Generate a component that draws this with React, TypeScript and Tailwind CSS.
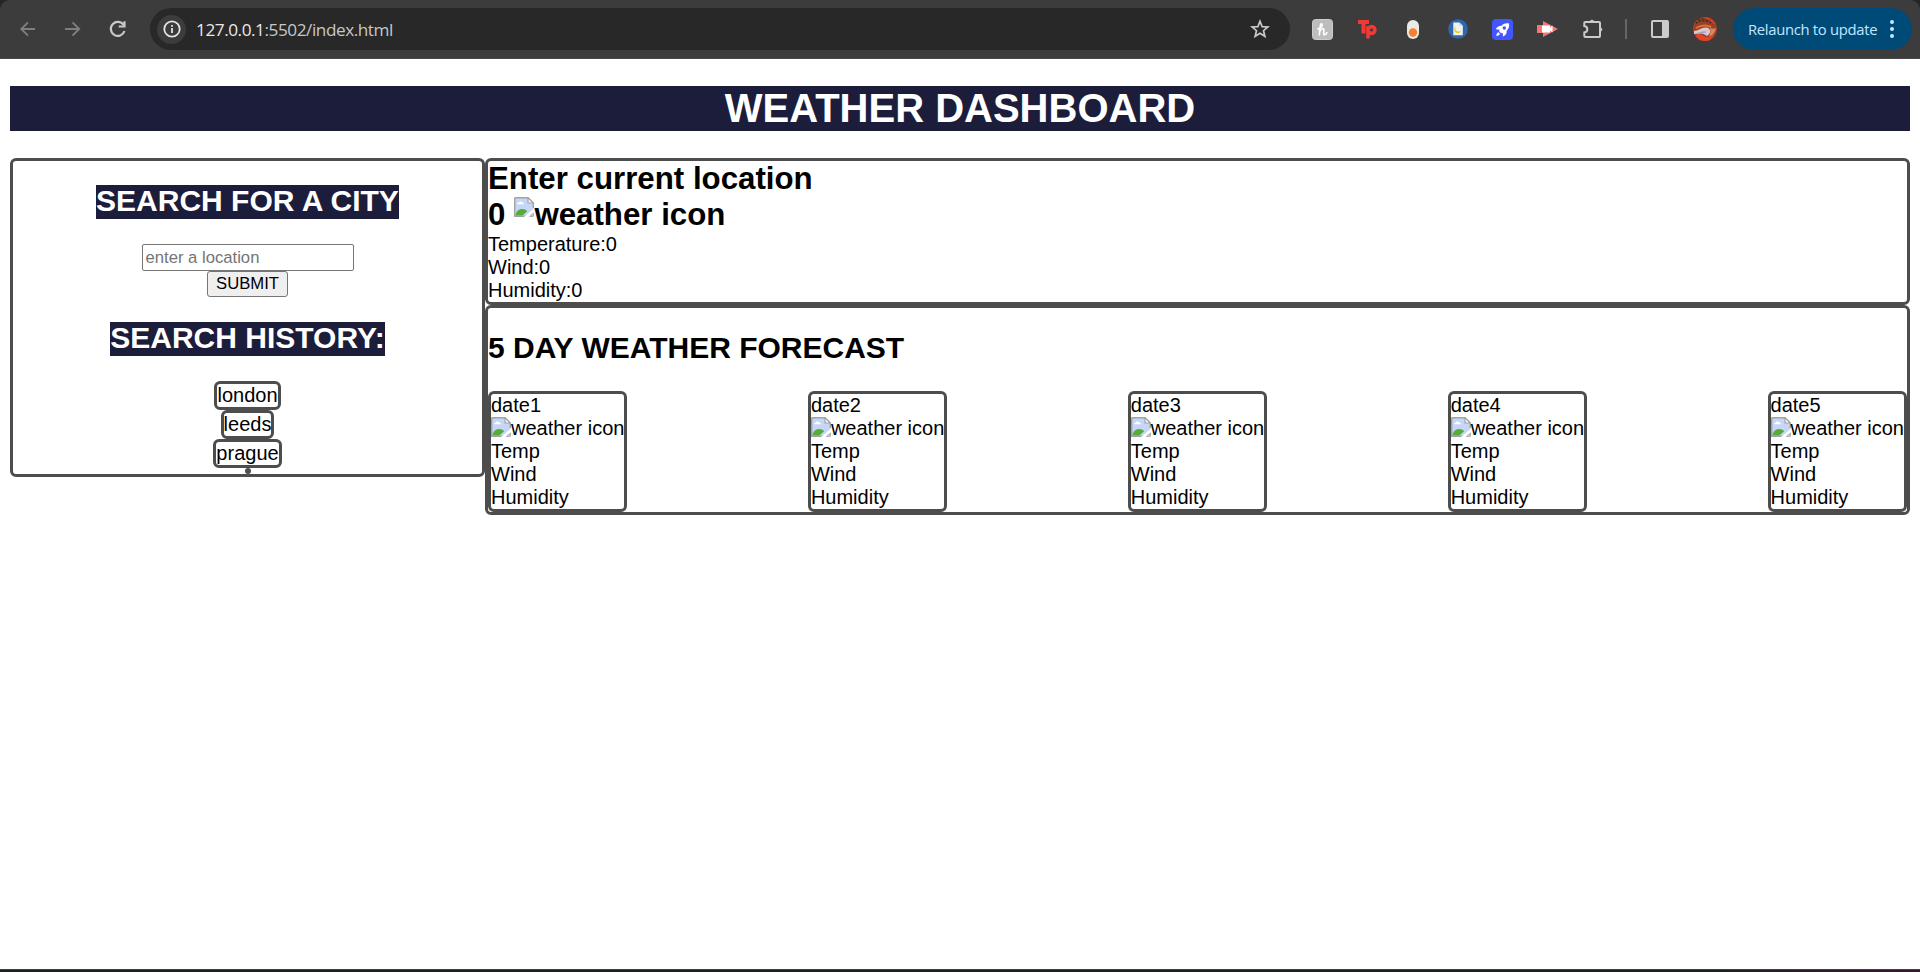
import React from "react";

function BrokenImage({ className = "" }: { className?: string }) {
  return (
    <svg viewBox="0 0 20 20" className={"inline-block h-5 w-5 shrink-0 " + className}>
      <path d="M.7.7H14L19.3 6v7L12 19.3H.7Z" fill="#c5d6f6" />
      <path d="M.7.7V19.3H12M.7.7H14L19.3 6v5" fill="none" stroke="#a3a3a3" strokeWidth="1.4" />
      <path d="M14 .7V6h5.3Z" fill="#f4f4f4" stroke="#a3a3a3" strokeWidth="1.1" />
      <path d="M3 7.2c0-1.300 1-1.700 1.800-1.500C5.200 4 8 4 8.300 5.600c1.200 0 1.600.8 1.500 1.600Z" fill="#fff" />
      <path d="M1.400 18.600c.4-4 3.300-6.600 6.800-6.600 2.200 0 3.800.9 5 2.200l-4.800 4.400Z" fill="#57ab37" />
      <path d="M19.300 16v3.300h-4Z" fill="#c5d6f6" stroke="#a3a3a3" strokeWidth="1" />
      <path d="M10 20 20 11.500v3.300L14.500 20Z" fill="#fff" />
    </svg>
  );
}

function Heading({ children }: { children: React.ReactNode }) {
  return (
    <h2 className="h-[34px] bg-[#1c1c3b] text-[30px] leading-[32px] font-bold whitespace-nowrap text-white">
      {children}
    </h2>
  );
}

function Toolbar() {
  return (
    <div className="bg-[#262626]">
      <div className="flex h-[59px] items-center rounded-t-[10px] border-b border-[#474747] bg-[#3c3c3c]">
        <div className="flex w-[150px] shrink-0 items-center pl-[18px]">
          <svg viewBox="0 0 20 20" className="h-5 w-5" fill="none" stroke="#7e7e7e" strokeWidth="1.9">
            <path d="M17 10H3.500M10 3.300 3.300 10l6.700 6.700" />
          </svg>
          <svg viewBox="0 0 20 20" className="ml-[25px] h-5 w-5" fill="none" stroke="#7e7e7e" strokeWidth="1.900">
            <path d="M2 10h13.500M9.500 3.300 16.200 10l-6.700 6.700" />
          </svg>
          <svg viewBox="0 0 20 20" className="ml-[25px] h-5 w-5" fill="none" stroke="#c9c9c9" strokeWidth="2.200">
            <path d="M15.800 6.200A7 7 0 1 0 16.500 12" />
            <path d="M16.500 2.200v5.300h-5.800" />
          </svg>
        </div>
        <div className="flex h-[42px] w-[1140px] shrink-0 items-center rounded-full bg-[#282828] pr-5 pl-[7px]">
          <div className="flex h-[29px] w-[29px] items-center justify-center rounded-full bg-[#3c3c3c]">
            <svg viewBox="0 0 18 18" className="h-[18px] w-[18px]" fill="none" stroke="#e3e3e3" strokeWidth="1.800">
              <circle cx="9" cy="9" r="7.700" />
              <path d="M9 8v5M9 5v1.800" />
            </svg>
          </div>
          <div className="ml-[10px] flex-1 font-['Open_Sans','Noto_Sans',sans-serif] text-[17.200px] tracking-[-0.450px] text-[#c7c7c7]">
            <span className="text-[#e8e8e8]">127.0.0.1</span>:5502/index.html
          </div>
          <svg viewBox="0 0 20 20" className="h-5 w-5" fill="none" stroke="#c9c9c9" strokeWidth="1.700">
            <path d="m10 2.300 2.100 5.300 5.800.4-4.400 3.700 1.400 5.600-4.900-3.100-4.900 3.100 1.400-5.600L2.100 8l5.800-.4Z" />
          </svg>
        </div>
        <div className="flex shrink-0 items-center pl-[22px]">
          <svg viewBox="0 0 21 21" className="h-[21px] w-[21px]">
            <rect x=".5" y=".5" width="20" height="20" rx="3" fill="#bdbdbd" stroke="#cdcdcd" />
            <path d="M6 9.800C8.800 9.300 11 6.500 10 5c-1.200-1.200-2.200 2-2.600 10.800M7.600 13c1-3 3.800-4.500 4.200-2.500.3 1.500-1 5.300.6 5.300 1 0 1.800-1 2.400-2" fill="none" stroke="#fff" strokeWidth="1.700" strokeLinecap="round" />
          </svg>
          <svg viewBox="0 0 20 20" className="ml-[24px] h-5 w-5" fill="none" stroke="#f03a38">
            <path d="M1 3h11M6.500 2v12.500" strokeWidth="4" />
            <path d="M11 19.500V7" strokeWidth="3.600" />
            <circle cx="14.500" cy="11" r="3.400" strokeWidth="3.600" />
          </svg>
          <svg viewBox="0 0 12 19" className="ml-[30px] h-[19px] w-3">
            <rect width="12" height="19" rx="6" fill="#e9e9e6" />
            <circle cx="6" cy="12.500" r="4.200" fill="#f5812f" />
          </svg>
          <svg viewBox="0 0 20 20" className="ml-[29px] h-5 w-5">
            <circle cx="10" cy="10" r="9.800" fill="#2e66b1" />
            <path d="M5.300 3.500h6l3.500 3.300v9.500H5.300Z" fill="#f5f3e7" />
            <path d="M8 7c-2 3 .5 7 5 5-1 3.300-6.500 2.500-6.700-1.300C6.200 9 7 7.500 8 7" fill="#e7c833" />
            <path d="M11.300 3.500v3.300h3.500" fill="#c8d3df" />
          </svg>
          <svg viewBox="0 0 21 21" className="ml-[24px] h-[21px] w-[21px]">
            <rect width="21" height="21" rx="4" fill="#4255ff" />
            <path d="M17 4.500c-3-.6-5.500.2-7.300 2.200C7 6.500 5 7.800 3.800 10.300l3.900.5-.6 1.500 2 2 1.500-.6.5 3.900c2.500-1.200 3.800-3.200 3.600-5.900 2-1.800 2.800-4.200 2.300-7.200Z" fill="#fff" />
            <circle cx="12.300" cy="9" r="1.700" fill="#4255ff" />
            <path d="M6.500 13.300c-1.500.4-2 1.500-2.200 3.600 2.100-.2 3.200-.7 3.600-2.200Z" fill="#fff" />
          </svg>
          <svg viewBox="0 0 21 18" className="ml-[24px] h-[18px] w-[21px]">
            <path d="M0 5h6V1l15 8L6 17v-4H0Z" fill="#f77575" />
            <path d="M5 5.500h8v2l2.500-2V12.500l-2.500-2v2H5Z" fill="#fff" />
          </svg>
          <svg viewBox="0 0 22 22" className="ml-[24px] h-[22px] w-[22px]" fill="none" stroke="#cbcbcb" strokeWidth="2">
            <path d="M3.300 4H17a1 1 0 0 1 1 1v13a1 1 0 0 1-1 1H3.300a1 1 0 0 1-1-1v-3.500c4-.5 4-6 0-6.500V5a1 1 0 0 1 1-1Z" />
            <path d="M8 3.500a2.200 2.200 0 0 1 4 0ZM18.500 9.500a2.200 2.200 0 0 1 0 4Z" fill="#cbcbcb" strokeWidth="1" />
          </svg>
          <div className="ml-[21px] h-5 w-[2px] bg-[#666]" />
          <svg viewBox="0 0 18 18" className="ml-[24px] h-[18px] w-[18px]">
            <rect x="1" y="1" width="16" height="16" rx="1" fill="none" stroke="#cbcbcb" strokeWidth="2" />
            <path d="M11 1h6v16h-6Z" fill="#cbcbcb" />
          </svg>
          <svg viewBox="0 0 24 24" className="ml-[24px] h-6 w-6 rounded-full">
            <rect width="24" height="24" fill="#a93e25" />
            <path d="M0 12c5-6 14-6 24 0V0H0Z" fill="#8f4528" />
            <path d="M3 6c5-3 11-3 17 1M5 3c4-2 9-1 13 1" stroke="#4b2419" strokeWidth="1.500" strokeDasharray="2 1.500" fill="none" />
            <path d="M12 1c4 0 8 3 9 6" stroke="#e23a1c" strokeWidth="2" fill="none" />
            <path d="M3 11c5-3 11-3 15-1" stroke="#d9713f" strokeWidth="2" fill="none" />
            <path d="M1 14c5 0 9-5 14-3 3 1 3 6-1 8-3-3-8-3-13-2Z" fill="#d6c9d2" />
            <path d="M4 16c3-1 7-3 10-1-2 1-5 1-9 3Z" fill="#9aa3c4" />
            <path d="M17 11c3 1 4 1 6 0-1 5-3 7-7 9 1-3 2-6 1-9Z" fill="#d58a60" />
            <path d="M2 18c5-2 8 1 11 2s5-2 8-2l-5 6H7Z" fill="#e0442a" />
          </svg>
        </div>
        <div className="ml-[16px] flex h-[42px] w-[179px] shrink-0 items-center rounded-full bg-[#004a77] pl-[15px] font-['Open_Sans','Noto_Sans',sans-serif] text-[14.800px] tracking-[-0.300px] text-[#c2e7ff]">
          <span className="w-[130px] whitespace-nowrap">Relaunch to update</span>
          <svg viewBox="0 0 4 18" className="ml-[12px] h-[18px] w-1" fill="#c2e7ff">
            <circle cx="2" cy="2" r="2" />
            <circle cx="2" cy="9" r="2" />
            <circle cx="2" cy="16" r="2" />
          </svg>
        </div>
      </div>
    </div>
  );
}

function SearchPanel() {
  return (
    <aside className="flex h-[319px] w-[475px] shrink-0 flex-col items-center rounded-[6px] border-[3px] border-[#4d4d4d] pt-6">
      <Heading>SEARCH FOR A CITY</Heading>
      <input
        placeholder="enter a location"
        className="mt-[25px] h-[27px] w-[212px] shrink-0 rounded-[2px] border border-[#767676] px-[3px] text-[16.670px] placeholder:text-[#757575]"
      />
      <button className="h-[26px] w-[81px] shrink-0 rounded-[3px] border border-[#767676] bg-[#efefef] text-[16.670px] leading-6">
        SUBMIT
      </button>
      <div className="mt-[25px]">
        <Heading>SEARCH HISTORY:</Heading>
      </div>
      <ul className="mt-[25px] flex flex-col items-center">
        {["london", "leeds", "prague", ""].map((city) => (
          <li key={city} className="rounded-[6px] border-[3px] border-[#4d4d4d]">
            {city}
          </li>
        ))}
      </ul>
    </aside>
  );
}

function ForecastCard({ date }: { date: string }) {
  return (
    <div className="rounded-[6px] border-[3px] border-[#4d4d4d]">
      <p>{date}</p>
      <div className="flex h-[23px] whitespace-nowrap">
        <BrokenImage />
        weather icon
      </div>
      <p>Temp</p>
      <p>Wind</p>
      <p>Humidity</p>
    </div>
  );
}

export default function App() {
  return (
    <div className="flex h-[972px] flex-col overflow-hidden bg-white font-['Liberation_Sans',Arial,sans-serif] text-[20px] leading-[23px] text-black">
      <Toolbar />
      <main className="flex-1 px-[10px] pt-[27px]">
        <h1 className="h-[45px] bg-[#1c1c3b] text-center text-[40px] leading-[45px] font-bold text-white">
          WEATHER DASHBOARD
        </h1>
        <div className="mt-[27px] flex items-start">
          <SearchPanel />
          <div className="flex-1">
            <section className="h-[147px] rounded-[6px] border-[3px] border-[#4d4d4d]">
              <div className="text-[31.250px] leading-9 font-bold">
                <p>Enter current location</p>
                <p className="flex">
                  <span className="mr-[9px]">0</span>
                  <BrokenImage />
                  weather icon
                </p>
              </div>
              <p>Temperature:0</p>
              <p>Wind:0</p>
              <p>Humidity:0</p>
            </section>
            <section className="rounded-[6px] border-[3px] border-[#4d4d4d] pt-[24px]">
              <h2 className="mb-[27px] text-[30px] leading-[32px] font-bold">5 DAY WEATHER FORECAST</h2>
              <div className="flex justify-between">
                {["date1", "date2", "date3", "date4", "date5"].map((date) => (
                  <ForecastCard key={date} date={date} />
                ))}
              </div>
            </section>
          </div>
        </div>
      </main>
      <div className="h-[3px] border-t border-[#3f4142] bg-linear-to-r from-[#1d2021] from-90% to-[#3a1830]" />
    </div>
  );
}
